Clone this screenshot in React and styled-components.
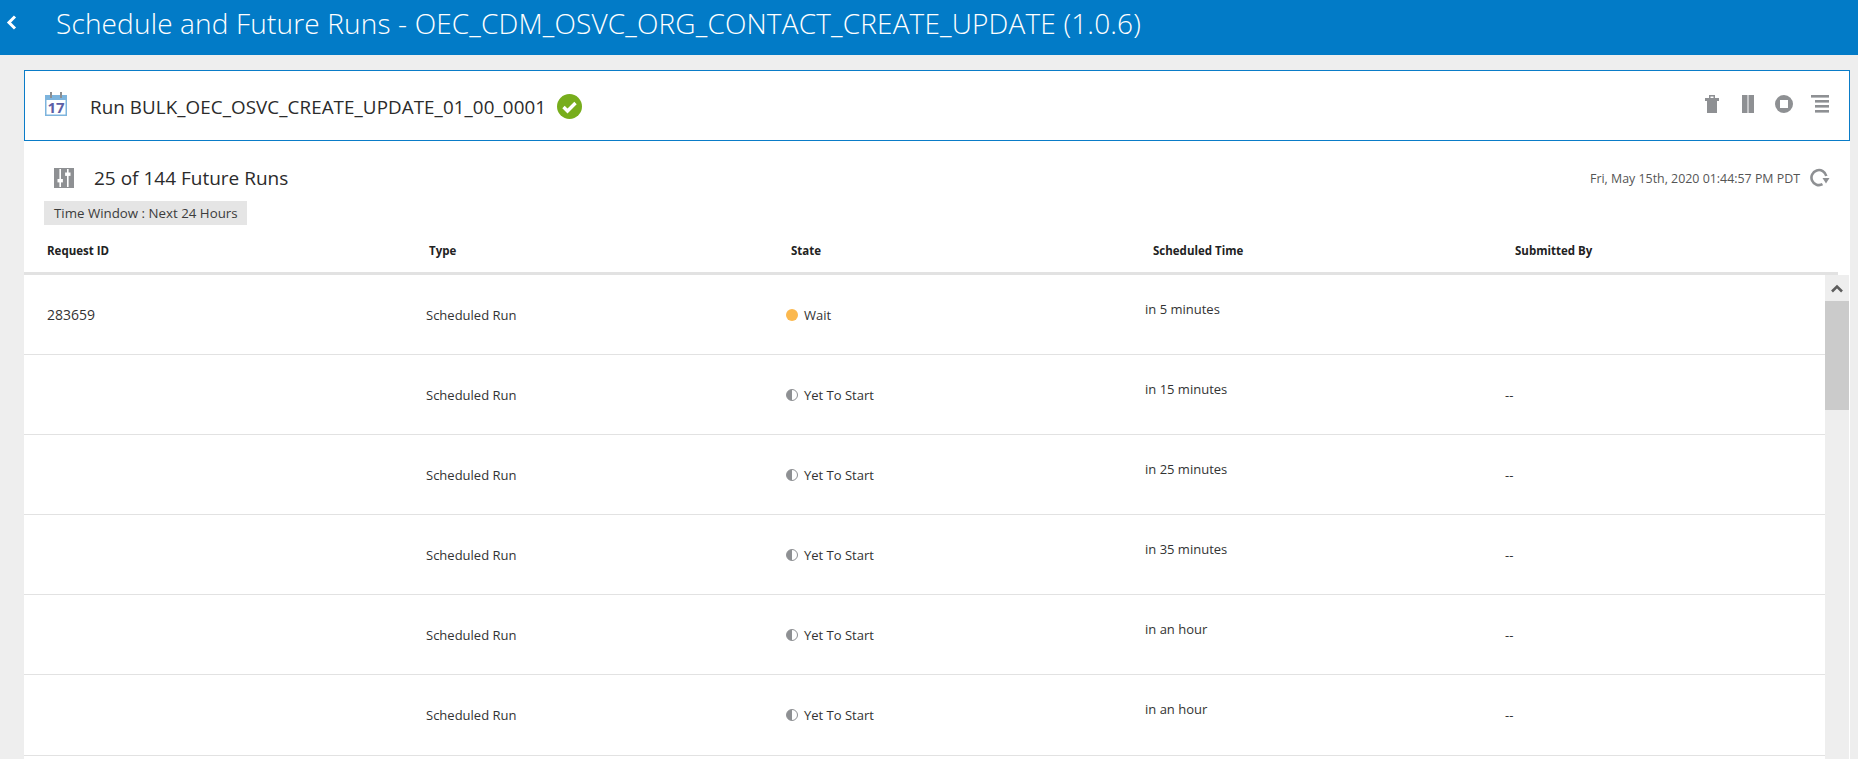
import React from "react";
import styled, { createGlobalStyle } from "styled-components";

const GlobalStyle = createGlobalStyle`
  html, body {
    margin: 0;
    height: 100%;
    overflow: hidden;
    background: #eeeeee;
    font-family: "Open Sans", "Noto Sans", sans-serif;
    color: #2b2b2b;
  }
`;

const Page = styled.div`
  height: 759px;
  display: flex;
  flex-direction: column;
  overflow: hidden;
`;
const Header = styled.div`
  height: 55px;
  flex: none;
  display: flex;
  align-items: center;
  background: #027bc7;
  color: white;
`;
const BackButton = styled.div`
  width: 56px;
  padding-left: 6px;
  margin-top: -10px;
  box-sizing: border-box;
  display: flex;
  align-items: center;
`;
const Title = styled.div`
  font-size: 28px;
  font-weight: 300;
  letter-spacing: 0.16px;
  white-space: nowrap;
  margin-top: -9px;
`;
const Content = styled.div`
  flex: 1;
  min-height: 0;
  margin: 15px 8px 0 24px;
  background: white;
  display: flex;
  flex-direction: column;
`;
const RunPanel = styled.div`
  height: 71px;
  flex: none;
  box-sizing: border-box;
  border: 1px solid #0a7cc8;
  display: flex;
  align-items: center;
  padding: 0 20px 0 20px;
`;
const CalendarSlot = styled.div`
  display: flex;
  margin-top: -3px;
`;
const RunName = styled.div`
  font-size: 18.8px;
  letter-spacing: 0.08px;
  margin: 3px 11px 0 23px;
  white-space: nowrap;
`;
const CheckSlot = styled.div`
  display: flex;
  margin-top: 2px;
`;
const Actions = styled.div`
  margin-left: auto;
  margin-top: -3px;
  display: flex;
  gap: 18px;
`;
const Summary = styled.div`
  height: 74px;
  flex: none;
  display: flex;
  align-items: center;
  padding: 0 20px 0 30px;
`;
const SummaryText = styled.div`
  font-size: 19px;
  margin-left: 20px;
`;
const Timestamp = styled.div`
  margin-left: auto;
  margin-right: 10px;
  font-size: 12.4px;
  color: #555;
`;
const Tag = styled.div`
  align-self: flex-start;
  margin-left: 20px;
  margin-top: -14px;
  height: 24px;
  width: 203px;
  box-sizing: border-box;
  padding-left: 10px;
  line-height: 24px;
  font-size: 13.3px;
  background: #e5e5e5;
  color: #3c3c3c;
  white-space: nowrap;
`;
const HeadRow = styled.div`
  height: 50px;
  flex: none;
  box-sizing: border-box;
  margin-right: 12px;
  padding-left: 23px;
  border-bottom: 3px solid #e2e2e2;
  display: grid;
  grid-template-columns: 382px 362px 362px 362px 1fr;
  align-items: center;
`;
const HeadCell = styled.div`
  font-size: 11.5px;
  font-weight: 700;
  color: #222;
  margin-top: 3px;
`;
const TableBody = styled.div`
  flex: 1;
  min-height: 0;
  display: flex;
  overflow: hidden;
`;
const Rows = styled.div`
  flex: 1;
  min-width: 0;
`;
const Row = styled.div`
  height: 80.1px;
  box-sizing: border-box;
  padding-left: 23px;
  border-bottom: 1px solid #e2e2e2;
  display: grid;
  grid-template-columns: 379px 360px 359px 360px 1fr;
  align-items: center;
`;
const Cell = styled.div`
  font-size: 13px;
  color: #333;
  padding-bottom: ${(props) => (props.$raised ? "12px" : "0")};
`;
const IdCell = styled(Cell)`
  font-size: 14px;
`;
const StateCell = styled(Cell)`
  display: flex;
  align-items: center;
  gap: 6px;
`;
const WaitDot = styled.span`
  width: 12px;
  height: 12px;
  border-radius: 50%;
  background: #fbb84e;
`;
const PendingDot = styled.span`
  width: 12px;
  height: 12px;
  box-sizing: border-box;
  border-radius: 50%;
  border: 1px solid #8e9093;
  background: linear-gradient(to right, #8e9093 50%, white 50%);
`;
const ScrollBar = styled.div`
  width: 24px;
  flex: none;
  margin-right: 1px;
  background: #eeeeee;
  display: flex;
  flex-direction: column;
`;
const ScrollArrow = styled.div`
  height: 26px;
  display: flex;
  align-items: center;
  justify-content: center;
`;
const ScrollThumb = styled.div`
  height: 109px;
  background: #cbcbcb;
`;

const BackIcon = () => (
  <svg width="11" height="15" viewBox="0 0 11 15">
    <path d="M9 1.5 3 7.5l6 6" fill="none" stroke="white" strokeWidth="3" />
  </svg>
);

const CalendarIcon = () => (
  <svg width="22" height="24" viewBox="0 0 22 24">
    <rect x="0.75" y="3.75" width="20.5" height="19.5" fill="#fff" stroke="#7db4dd" strokeWidth="1.5" />
    <rect x="1" y="4" width="20" height="4" fill="#7db4dd" />
    <rect x="5" y="0" width="2" height="6" fill="#8c8f92" />
    <rect x="15" y="0" width="2" height="6" fill="#8c8f92" />
    <text x="11" y="21" textAnchor="middle" fontSize="15" fontWeight="700" fill="#5b5ea6" fontFamily="Open Sans, sans-serif">17</text>
  </svg>
);

const CheckIcon = () => (
  <svg width="25" height="25" viewBox="0 0 25 25">
    <circle cx="12.5" cy="12.5" r="12.5" fill="#77ad1c" />
    <path d="M6.5 13 10.5 17 18.5 9" fill="none" stroke="white" strokeWidth="3.4" />
  </svg>
);

const TrashIcon = () => (
  <svg width="18" height="18" viewBox="0 0 18 18" fill="#8e9093">
    <path d="M6 3V0h6v3h4v3H2V3zm1.5 0h3V1.4h-3z" fillRule="evenodd" />
    <rect x="4" y="6" width="10" height="12" />
  </svg>
);

const PauseIcon = () => (
  <svg width="18" height="18" viewBox="0 0 18 18" fill="#8e9093">
    <rect x="3" y="0" width="5.5" height="18" />
    <rect x="9.5" y="0" width="5.5" height="18" />
  </svg>
);

const StopIcon = () => (
  <svg width="18" height="18" viewBox="0 0 18 18">
    <circle cx="9" cy="9" r="9" fill="#8e9093" />
    <rect x="5" y="5" width="8" height="8" fill="white" />
  </svg>
);

const LinesIcon = () => (
  <svg width="18" height="18" viewBox="0 0 18 18" fill="#8e9093">
    <rect x="0" y="0" width="18" height="2.6" />
    <rect x="4" y="5" width="14" height="2.6" />
    <rect x="4" y="10" width="14" height="2.6" />
    <rect x="4" y="15" width="14" height="2.6" />
  </svg>
);

const SlidersIcon = () => (
  <svg width="20" height="20" viewBox="0 0 20 20">
    <rect width="20" height="20" fill="#8e9093" />
    <rect x="5.4" y="1" width="1.6" height="18" fill="white" />
    <rect x="13" y="1" width="1.6" height="18" fill="white" />
    <rect x="3.5" y="11" width="5.4" height="3.4" fill="white" />
    <rect x="11.1" y="4.5" width="5.4" height="3.4" fill="white" />
  </svg>
);

const RefreshIcon = () => (
  <svg width="20" height="20" viewBox="0 0 20 20" style={{ flex: "none" }}>
    <path d="M16.3 8A7.5 7.5 0 1 0 12.5 16.2" fill="none" stroke="#8e9093" strokeWidth="2.6" />
    <path d="M12.5 10h7l-3.5 5.5z" fill="#8e9093" />
  </svg>
);

const ChevronUpIcon = () => (
  <svg width="12" height="9" viewBox="0 0 12 9">
    <path d="M1 7.5 6 2.5l5 5" fill="none" stroke="#5d5d5d" strokeWidth="2.6" />
  </svg>
);

const runs = [
  { id: "283659", state: "wait", time: "in 5 minutes", by: "" },
  { id: "", state: "pending", time: "in 15 minutes", by: "--" },
  { id: "", state: "pending", time: "in 25 minutes", by: "--" },
  { id: "", state: "pending", time: "in 35 minutes", by: "--" },
  { id: "", state: "pending", time: "in an hour", by: "--" },
  { id: "", state: "pending", time: "in an hour", by: "--" },
];

const App = () => {
  return (
    <Page>
      <GlobalStyle />
      <Header>
        <BackButton>
          <BackIcon />
        </BackButton>
        <Title>Schedule and Future Runs - OEC_CDM_OSVC_ORG_CONTACT_CREATE_UPDATE (1.0.6)</Title>
      </Header>
      <Content>
        <RunPanel>
          <CalendarSlot>
            <CalendarIcon />
          </CalendarSlot>
          <RunName>Run BULK_OEC_OSVC_CREATE_UPDATE_01_00_0001</RunName>
          <CheckSlot>
            <CheckIcon />
          </CheckSlot>
          <Actions>
            <TrashIcon />
            <PauseIcon />
            <StopIcon />
            <LinesIcon />
          </Actions>
        </RunPanel>
        <Summary>
          <SlidersIcon />
          <SummaryText>25 of 144 Future Runs</SummaryText>
          <Timestamp>Fri, May 15th, 2020 01:44:57 PM PDT</Timestamp>
          <RefreshIcon />
        </Summary>
        <Tag>Time Window : Next 24 Hours</Tag>
        <HeadRow>
          <HeadCell>Request ID</HeadCell>
          <HeadCell>Type</HeadCell>
          <HeadCell>State</HeadCell>
          <HeadCell>Scheduled Time</HeadCell>
          <HeadCell>Submitted By</HeadCell>
        </HeadRow>
        <TableBody>
          <Rows>
            {runs.map((run, index) => (
              <Row key={index}>
                <IdCell>{run.id}</IdCell>
                <Cell>Scheduled Run</Cell>
                <StateCell>
                  {run.state === "wait" ? <WaitDot /> : <PendingDot />}
                  {run.state === "wait" ? "Wait" : "Yet To Start"}
                </StateCell>
                <Cell $raised>{run.time}</Cell>
                <Cell>{run.by}</Cell>
              </Row>
            ))}
          </Rows>
          <ScrollBar>
            <ScrollArrow>
              <ChevronUpIcon />
            </ScrollArrow>
            <ScrollThumb />
          </ScrollBar>
        </TableBody>
      </Content>
    </Page>
  );
};

export default App;
